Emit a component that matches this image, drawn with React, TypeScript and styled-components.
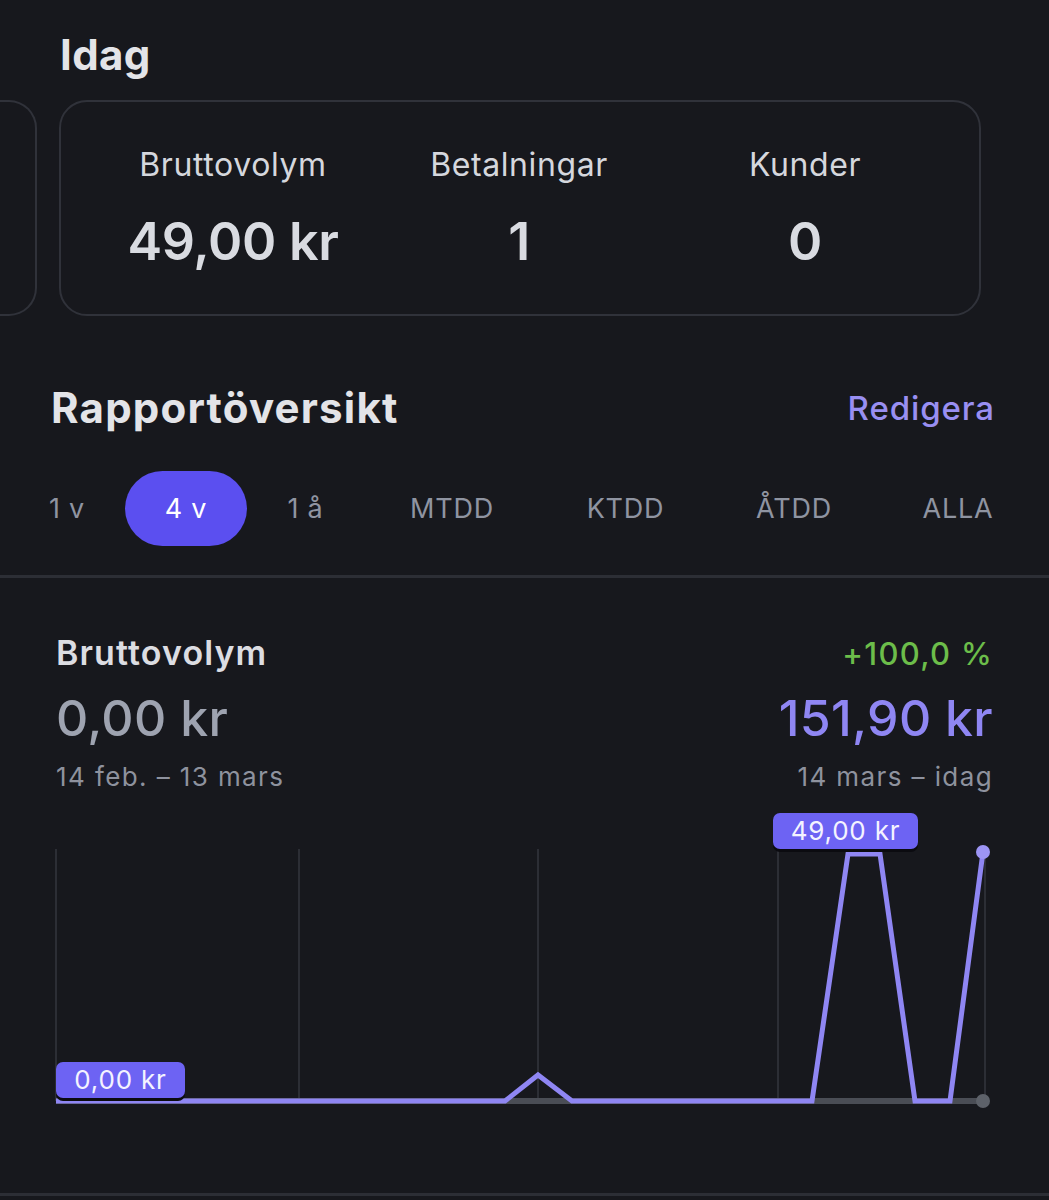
import React from 'react';
import styled, {createGlobalStyle} from 'styled-components';

const GlobalStyle = createGlobalStyle`
  html, body {
    margin: 0;
    padding: 0;
    background: #17181d;
  }
  body {
    font-family: Inter, "Noto Sans", "Liberation Sans", sans-serif;
    color: #e1e2e7;
  }
`;

const Page = styled.div`
  width: 1049px;
  min-height: 1200px;
  background: #17181d;
  overflow: hidden;
  padding-top: 34px;
`;

const Section = styled.div`
  padding: 0 55px 0 52px;
`;

const Heading = styled.h1<{size: number; spacing: number}>`
  margin: 0;
  font-size: ${p => p.size}px;
  line-height: 1;
  font-weight: 700;
  color: #e3e4e8;
  letter-spacing: ${p => p.spacing}px;
`;

const IdagHeading = styled(Heading)`
  padding-left: 8px;
`;

const Carousel = styled.div`
  display: flex;
  gap: 22px;
  margin-top: 24px;
`;

const PeekCard = styled.div`
  width: 37px;
  height: 216px;
  box-sizing: border-box;
  border: 2px solid #30323a;
  border-left: none;
  border-radius: 0 28px 28px 0;
  flex-shrink: 0;
`;

const StatCard = styled.div`
  width: 922px;
  height: 216px;
  box-sizing: border-box;
  border: 2px solid #30323a;
  border-radius: 28px;
  display: grid;
  grid-template-columns: repeat(3, 286px);
  padding: 0 33px 0 29px;
  align-content: center;
  flex-shrink: 0;
`;

const Stat = styled.div`
  display: flex;
  flex-direction: column;
  align-items: center;
  gap: 35px;
`;

const StatLabel = styled.div`
  font-size: 32px;
  line-height: 1;
  letter-spacing: 0.6px;
  color: #d5d7dd;
`;

const StatValue = styled.div`
  font-size: 52px;
  line-height: 1;
  font-weight: 600;
  color: #d9dbe1;
  letter-spacing: -0.3px;
`;

const HeaderRow = styled.div`
  display: flex;
  justify-content: space-between;
  align-items: center;
  margin-top: 71px;
  padding-right: 54px;
  padding-left: 51px;
`;

const EditLink = styled.a`
  font-size: 33px;
  line-height: 1;
  font-weight: 500;
  letter-spacing: 0.9px;
  color: #998ff2;
  cursor: pointer;
`;

const TabRow = styled.div`
  display: grid;
  grid-template-columns: 116px 122px 117px 176px 171px 166px 162px;
  justify-items: center;
  align-items: center;
  margin: 42px 0 0 9px;
`;

const Tab = styled.button<{active?: boolean}>`
  height: 75px;
  padding: 0 40px;
  border: none;
  border-radius: 38px;
  font-family: inherit;
  font-size: 27px;
  line-height: 1;
  letter-spacing: 0.8px;
  background: ${p => (p.active ? '#5b4ff0' : 'transparent')};
  color: ${p => (p.active ? '#ffffff' : '#8f94a1')};
  white-space: nowrap;
`;

const Divider = styled.div<{gap: number}>`
  height: 3px;
  background: #2c2e35;
  margin-top: ${p => p.gap}px;
`;

const MetricRow = styled.div<{gap: number}>`
  display: flex;
  justify-content: space-between;
  align-items: baseline;
  margin-top: ${p => p.gap}px;
  padding-left: 4px;
  padding-right: 1px;
`;

const MetricTitle = styled.div`
  font-size: 34px;
  line-height: 1;
  font-weight: 600;
  letter-spacing: 1.1px;
  color: #dcdde2;
`;

const Change = styled.div`
  font-size: 31px;
  line-height: 1;
  font-weight: 500;
  letter-spacing: 1.3px;
  color: #6cbd4a;
`;

const Amount = styled.div<{tone: 'prev' | 'cur'}>`
  font-size: 50px;
  line-height: 1;
  font-weight: 500;
  letter-spacing: 0.3px;
  color: ${p => (p.tone === 'cur' ? '#8f86f3' : '#9ea3b0')};
`;

const Period = styled.div`
  font-size: 26px;
  line-height: 1;
  letter-spacing: 1.4px;
  color: #8e929e;
`;

const ChartWrap = styled.div`
  position: relative;
  width: 942px;
  height: 300px;
  margin-top: 21px;

  svg {
    display: block;
  }
`;

const Bubble = styled.div<{x: number; y: number; w: number; h: number}>`
  position: absolute;
  left: ${p => p.x}px;
  top: ${p => p.y}px;
  width: ${p => p.w}px;
  height: ${p => p.h}px;
  border-radius: 7px;
  background: #6d63f3;
  color: #f4f3ff;
  font-size: 26px;
  line-height: 1;
  letter-spacing: 0.8px;
  display: flex;
  align-items: center;
  justify-content: center;
  box-shadow: 0 3px 0 #0b0b10;
`;

const gridX = [4, 247, 486, 726, 933];
const linePoints = [
  [4, 290], [453, 290], [486, 264], [520, 290], [760, 290],
  [796, 43], [828, 43], [863, 290], [898, 290], [931, 41],
];

function VolumeChart() {
  const d = linePoints.map(([x, y], i) => `${i ? 'L' : 'M'}${x} ${y}`).join(' ');
  return (
    <ChartWrap>
      <svg width="942" height="300" viewBox="0 0 942 300">
        {gridX.map(x => (
          <line key={x} x1={x} y1={38} x2={x} y2={290} stroke="#2c2e35" strokeWidth="2" />
        ))}
        <line x1={4} y1={290} x2={931} y2={290} stroke="#4a4d55" strokeWidth="6" />
        <circle cx={931} cy={290} r={7} fill="#5d6169" />
        <path d={d} fill="none" stroke="#8f86f3" strokeWidth="5" strokeLinejoin="miter" />
        <circle cx={931} cy={41} r={7} fill="#9d95f5" />
      </svg>
      <Bubble x={721} y={2} w={145} h={36}>49,00 kr</Bubble>
      <Bubble x={4} y={251} w={129} h={36}>0,00 kr</Bubble>
    </ChartWrap>
  );
}

const tabs = ['1 v', '4 v', '1 å', 'MTDD', 'KTDD', 'ÅTDD', 'ALLA'];

export default function App() {
  return (
    <Page>
      <GlobalStyle />
      <Section>
        <IdagHeading size={42} spacing={0.4}>Idag</IdagHeading>
      </Section>
      <Carousel>
        <PeekCard />
        <StatCard>
          <Stat>
            <StatLabel>Bruttovolym</StatLabel>
            <StatValue>49,00 kr</StatValue>
          </Stat>
          <Stat>
            <StatLabel>Betalningar</StatLabel>
            <StatValue>1</StatValue>
          </Stat>
          <Stat>
            <StatLabel>Kunder</StatLabel>
            <StatValue>0</StatValue>
          </Stat>
        </StatCard>
      </Carousel>

      <HeaderRow>
        <Heading size={42} spacing={1.2}>Rapportöversikt</Heading>
        <EditLink>Redigera</EditLink>
      </HeaderRow>

      <TabRow>
        {tabs.map(t => (
          <Tab key={t} active={t === '4 v'}>{t}</Tab>
        ))}
      </TabRow>

      <Divider gap={29} />

      <Section>
        <MetricRow gap={58}>
          <MetricTitle>Bruttovolym</MetricTitle>
          <Change>+100,0 %</Change>
        </MetricRow>
        <MetricRow gap={23}>
          <Amount tone="prev">0,00 kr</Amount>
          <Amount tone="cur">151,90 kr</Amount>
        </MetricRow>
        <MetricRow gap={21}>
          <Period>14 feb. – 13 mars</Period>
          <Period>14 mars – idag</Period>
        </MetricRow>
        <VolumeChart />
      </Section>

      <Divider gap={82} />
    </Page>
  );
}
